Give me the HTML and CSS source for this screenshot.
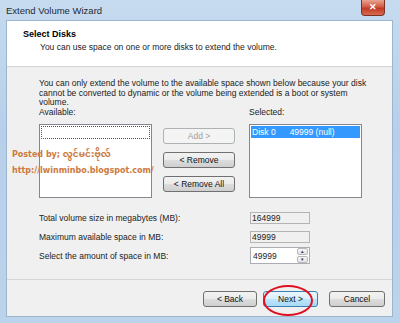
FILE: index.html
```html
<!DOCTYPE html>
<html lang="en">
<head>
  <meta name="viewport" content="width=device-width, initial-scale=1.0" />
  <title>Extend Volume Wizard</title>
  <link rel="stylesheet" href="styles.css">
</head>
<body>

  <div class="window">
    <div class="titlebar">
      <span class="title">Extend Volume Wizard</span>
      <span class="close">&#x2715;</span>
    </div>

    <div class="client">
      <div class="header">
        <h1>Select Disks</h1>
        <p>You can use space on one or more disks to extend the volume.</p>
      </div>

      <div class="content">
        <p class="intro">You can only extend the volume to the available space shown below because your disk cannot be converted to dynamic or the volume being extended is a boot or system volume.</p>

        <div class="disks">
          <div class="col">
            <label>Available:</label>
            <div class="listbox"><div class="focus"></div></div>
          </div>
          <div class="actions">
            <button disabled>Add &gt;</button>
            <button>&lt; Remove</button>
            <button>&lt; Remove All</button>
          </div>
          <div class="col">
            <label>Selected:</label>
            <div class="listbox">
              <div class="item"><span>Disk 0</span><span>49999 (null)</span></div>
            </div>
          </div>
        </div>

        <div class="sizes">
          <div class="row">
            <span class="label">Total volume size in megabytes (MB):</span>
            <span class="field">164999</span>
          </div>
          <div class="row">
            <span class="label">Maximum available space in MB:</span>
            <span class="field">49999</span>
          </div>
          <div class="row spin-row">
            <span class="label">Select the amount of space in MB:</span>
            <span class="spinner">
              <span class="value">49999</span>
              <span class="arrows"><span>&#9652;</span><span>&#9662;</span></span>
            </span>
          </div>
        </div>

        <div class="watermark">
          <div>Posted by; <span class="mm">လွင်မင်းဗိုလ်</span></div>
          <div>http://lwinminbo.blogspot.com/</div>
        </div>
      </div>

      <div class="footer">
        <button>&lt; Back</button>
        <button class="next">Next &gt;</button>
        <button class="cancel">Cancel</button>
        <span class="circle"></span>
      </div>
    </div>
  </div>

</body>
</html>
```

FILE: styles.css
```css
body {
  margin: 0;
  font-family: "Liberation Sans", Arial, sans-serif;
  background: #fff;
}

.window {
  width: 400px;
  height: 323px;
  box-sizing: border-box;
  background: linear-gradient(#c6dbf0, #b7cfe9 40%, #bcd3ec);
  display: flex;
  flex-direction: column;
}

.titlebar {
  height: 20px;
  flex: none;
  display: flex;
  align-items: flex-start;
  justify-content: space-between;
}

.title {
  font-size: 9.5px;
  color: #1e2a36;
  padding: 5px 0 0 6px;
}

.close {
  width: 24px;
  height: 16px;
  margin-right: 15px;
  box-sizing: border-box;
  border: 1px solid #7d3126;
  border-top: none;
  border-radius: 0 0 4px 4px;
  background: linear-gradient(#e8a493, #d35a44 45%, #c03a24 55%, #d86a4e);
  color: #fff;
  font-size: 9px;
  font-weight: bold;
  text-align: center;
  line-height: 15px;
}

.client {
  flex: 1;
  margin: 0 7px 6px 6px;
  background: #f0f0f0;
  border: 1px solid #9db6d0;
  display: flex;
  flex-direction: column;
  font-size: 8.5px;
  color: #222;
}

.header {
  height: 46px;
  flex: none;
  background: #fff;
  border-bottom: 1px solid #d5d5d5;
  padding: 8px 0 0 16px;
  box-sizing: border-box;
}

.header h1 {
  margin: 0;
  font-size: 9px;
  line-height: 11px;
  font-weight: bold;
  color: #000;
}

.header p {
  margin: 2px 0 0 17px;
  line-height: 10px;
}

.content {
  flex: 1;
  position: relative;
  padding: 12px 22px 0 32px;
  border-bottom: 1px solid #d5d5d5;
}

.intro {
  margin: 0;
  line-height: 9.5px;
}

.disks {
  display: flex;
  align-items: flex-start;
}

.col label {
  display: block;
  line-height: 9.5px;
  margin-bottom: 7px;
}

.listbox {
  width: 113px;
  height: 74px;
  box-sizing: border-box;
  background: #fff;
  border: 1px solid #828790;
  padding: 1px;
}

.focus {
  height: 11px;
  border: 1px dotted #555;
}

.item {
  background: #3399ff;
  color: #fff;
  height: 12px;
  line-height: 12px;
  display: flex;
  gap: 14px;
  padding-left: 1px;
}

.actions {
  width: 72px;
  margin: 20px 14px 0 11px;
  display: flex;
  flex-direction: column;
  gap: 8px;
}

button {
  font-family: inherit;
  font-size: 8.5px;
  height: 16px;
  padding: 0;
  color: #111;
  border: 1px solid #707070;
  border-radius: 3px;
  background: linear-gradient(#f2f2f2, #ebebeb 50%, #dddddd 51%, #cfcfcf);
}

button:disabled {
  color: #a0a0a0;
  border-color: #adb2b5;
  background: #f4f4f4;
}

.sizes {
  margin-top: 14px;
  display: flex;
  flex-direction: column;
  gap: 7px;
}

.row {
  display: flex;
  align-items: center;
  height: 12px;
}

.spin-row {
  height: 17px;
  margin-top: -3px;
}

.label {
  width: 211px;
}

.field {
  width: 60px;
  height: 12px;
  box-sizing: border-box;
  border: 1px solid #b4b4b4;
  background: #f0f0f0;
  line-height: 10px;
  padding-left: 1px;
}

.spinner {
  width: 60px;
  height: 17px;
  box-sizing: border-box;
  border: 1px solid #abadb3;
  background: #fff;
  display: flex;
  align-items: center;
}

.spinner .value {
  flex: 1;
  padding-left: 2px;
}

.arrows {
  width: 11px;
  height: 15px;
  display: flex;
  flex-direction: column;
  gap: 1px;
  margin-right: 1px;
}

.arrows span {
  flex: 1;
  border: 1px solid #b8b8b8;
  border-radius: 2px;
  background: linear-gradient(#f7f7f7, #e2e2e2);
  font-size: 5px;
  line-height: 5px;
  text-align: center;
  color: #333;
}

.watermark {
  position: absolute;
  left: 5px;
  top: 80px;
  font-family: "DejaVu Sans", Verdana, sans-serif;
  font-size: 8px;
  font-weight: bold;
  color: #cc7a3e;
  line-height: 15px;
}

.watermark .mm {
  font-family: "Noto Sans Myanmar", "DejaVu Sans", Verdana, "Noto Sans Myanmar", sans-serif;
  font-size: 9px;
}

.footer {
  height: 36px;
  flex: none;
  position: relative;
  display: flex;
  align-items: flex-start;
  padding: 11px 0 0 196px;
  box-sizing: border-box;
}

.footer button {
  width: 54px;
}

.footer .next {
  width: 55px;
  margin-left: 6px;
  border-color: #3c7fb1;
  background: linear-gradient(#eaf6fd, #d9f0fc 50%, #bee6fd 51%, #a7d9f5);
}

.footer .cancel {
  width: 56px;
  margin-left: 11px;
}

.circle {
  position: absolute;
  left: 256px;
  top: 5px;
  width: 50px;
  height: 31px;
  box-sizing: border-box;
  border: 2.5px solid #e01020;
  border-radius: 50%;
}
```
